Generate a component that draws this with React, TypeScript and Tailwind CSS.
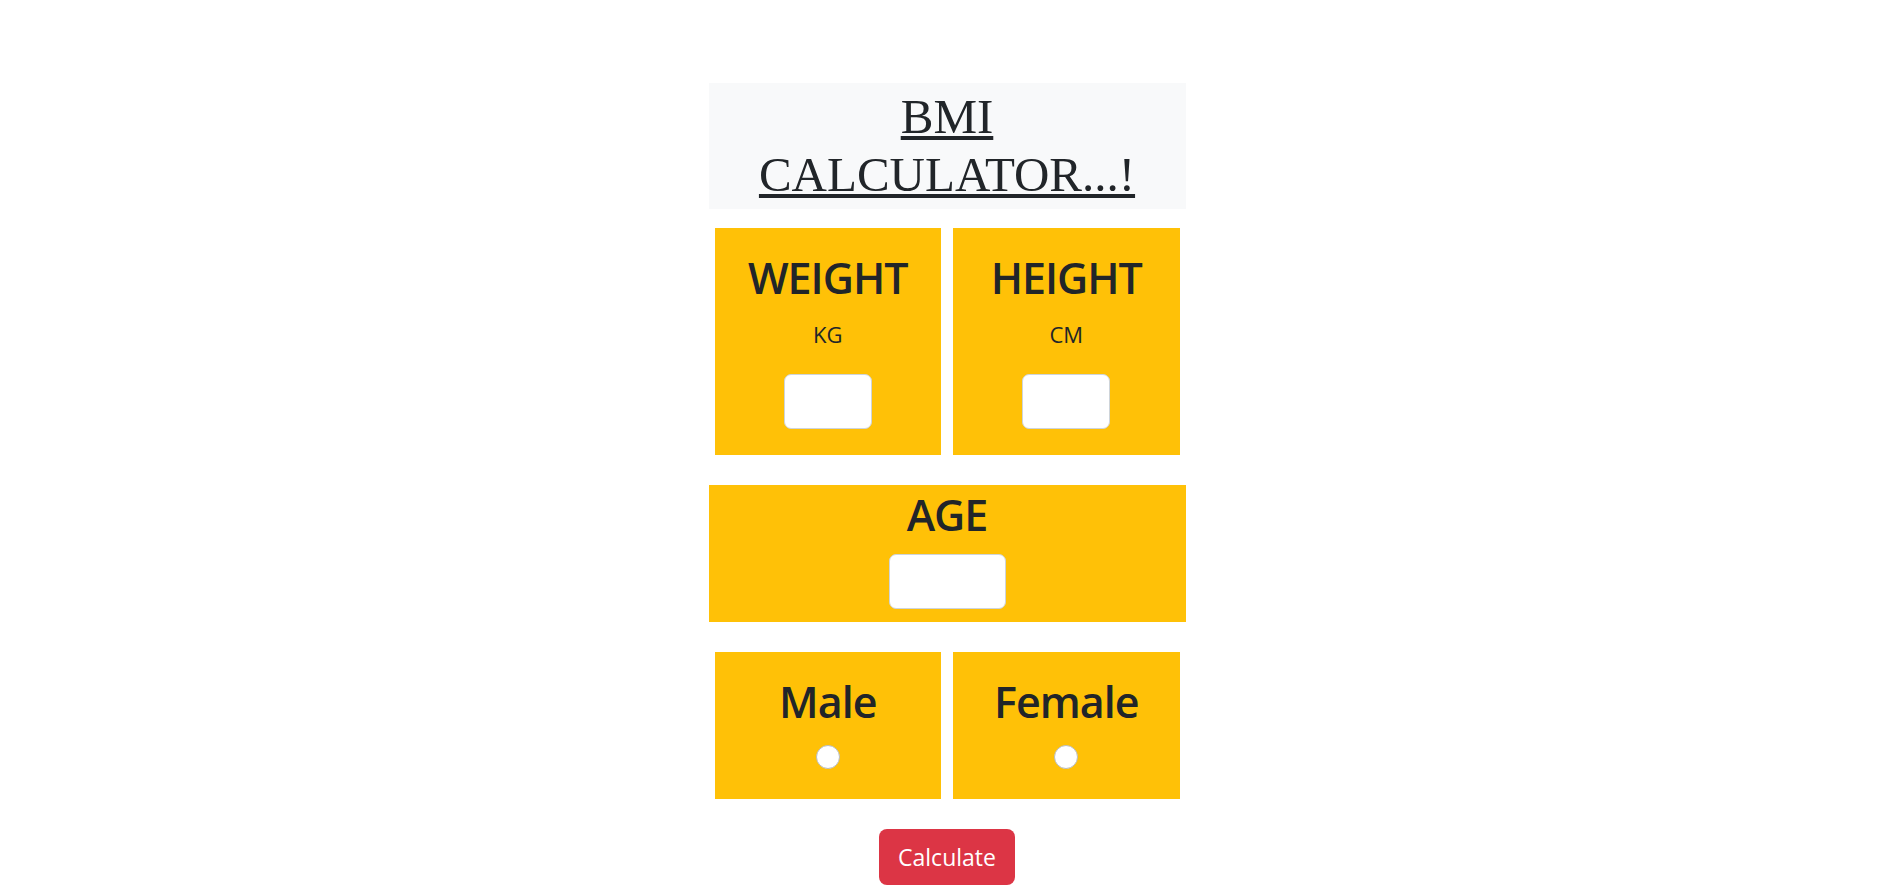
import React from "react";

const sans = { fontFamily: '"Open Sans", "Noto Sans", sans-serif' };

function Heading({ children }: { children: React.ReactNode }) {
  return (
    <div className="text-[43px] leading-none font-semibold text-[#212529] tracking-[-1px]">
      {children}
    </div>
  );
}

function TextBox({ w }: { w: string }) {
  return (
    <input
      type="text"
      className={`${w} h-[55px] bg-white border border-[#ced4da] rounded-[7px] outline-none`}
    />
  );
}

function Radio() {
  return (
    <input
      type="radio"
      name="gender"
      className="appearance-none w-[24px] h-[24px] rounded-full bg-white border border-[#b8bcc0] m-0"
    />
  );
}

export default function App() {
  return (
    <div className="min-h-[895px] w-full bg-white" style={sans}>
      <div className="mx-auto w-[477px] pt-[83px] flex flex-col">
        <div className="bg-[#f8f9fa] pt-[5px] pb-[5px] text-center">
          <h1
            className="text-[49px] leading-[58px] underline text-[#212529] font-normal"
            style={{ fontFamily: '"Liberation Serif", "Times New Roman", serif' }}
          >
            BMI
            <br />
            CALCULATOR...!
          </h1>
        </div>

        <div className="grid grid-cols-2 gap-[12px] px-[6px] mt-[19px]">
          <div className="bg-[#ffc107] h-[227px] flex flex-col items-center pt-[28px]">
            <Heading>WEIGHT</Heading>
            <div className="mt-[24px] text-[22px] leading-none font-normal text-[#212529]">KG</div>
            <div className="mt-[29px]">
              <TextBox w="w-[88px]" />
            </div>
          </div>
          <div className="bg-[#ffc107] h-[227px] flex flex-col items-center pt-[28px]">
            <Heading>HEIGHT</Heading>
            <div className="mt-[24px] text-[22px] leading-none font-normal text-[#212529]">CM</div>
            <div className="mt-[29px]">
              <TextBox w="w-[88px]" />
            </div>
          </div>
        </div>

        <div className="bg-[#ffc107] h-[137px] mt-[30px] flex flex-col items-center pt-[8px]">
          <Heading>AGE</Heading>
          <div className="mt-[18px]">
            <TextBox w="w-[117px]" />
          </div>
        </div>

        <div className="grid grid-cols-2 gap-[12px] px-[6px] mt-[30px]">
          <div className="bg-[#ffc107] h-[147px] flex flex-col items-center pt-[28px]">
            <Heading>Male</Heading>
            <div className="mt-[22px] h-[24px] flex">
              <Radio />
            </div>
          </div>
          <div className="bg-[#ffc107] h-[147px] flex flex-col items-center pt-[28px]">
            <Heading>Female</Heading>
            <div className="mt-[22px] h-[24px] flex">
              <Radio />
            </div>
          </div>
        </div>

        <div className="flex justify-center mt-[30px]">
          <button className="w-[136px] h-[56px] bg-[#dc3545] text-white text-[23px] rounded-[8px] leading-none">
            Calculate
          </button>
        </div>
      </div>
    </div>
  );
}
